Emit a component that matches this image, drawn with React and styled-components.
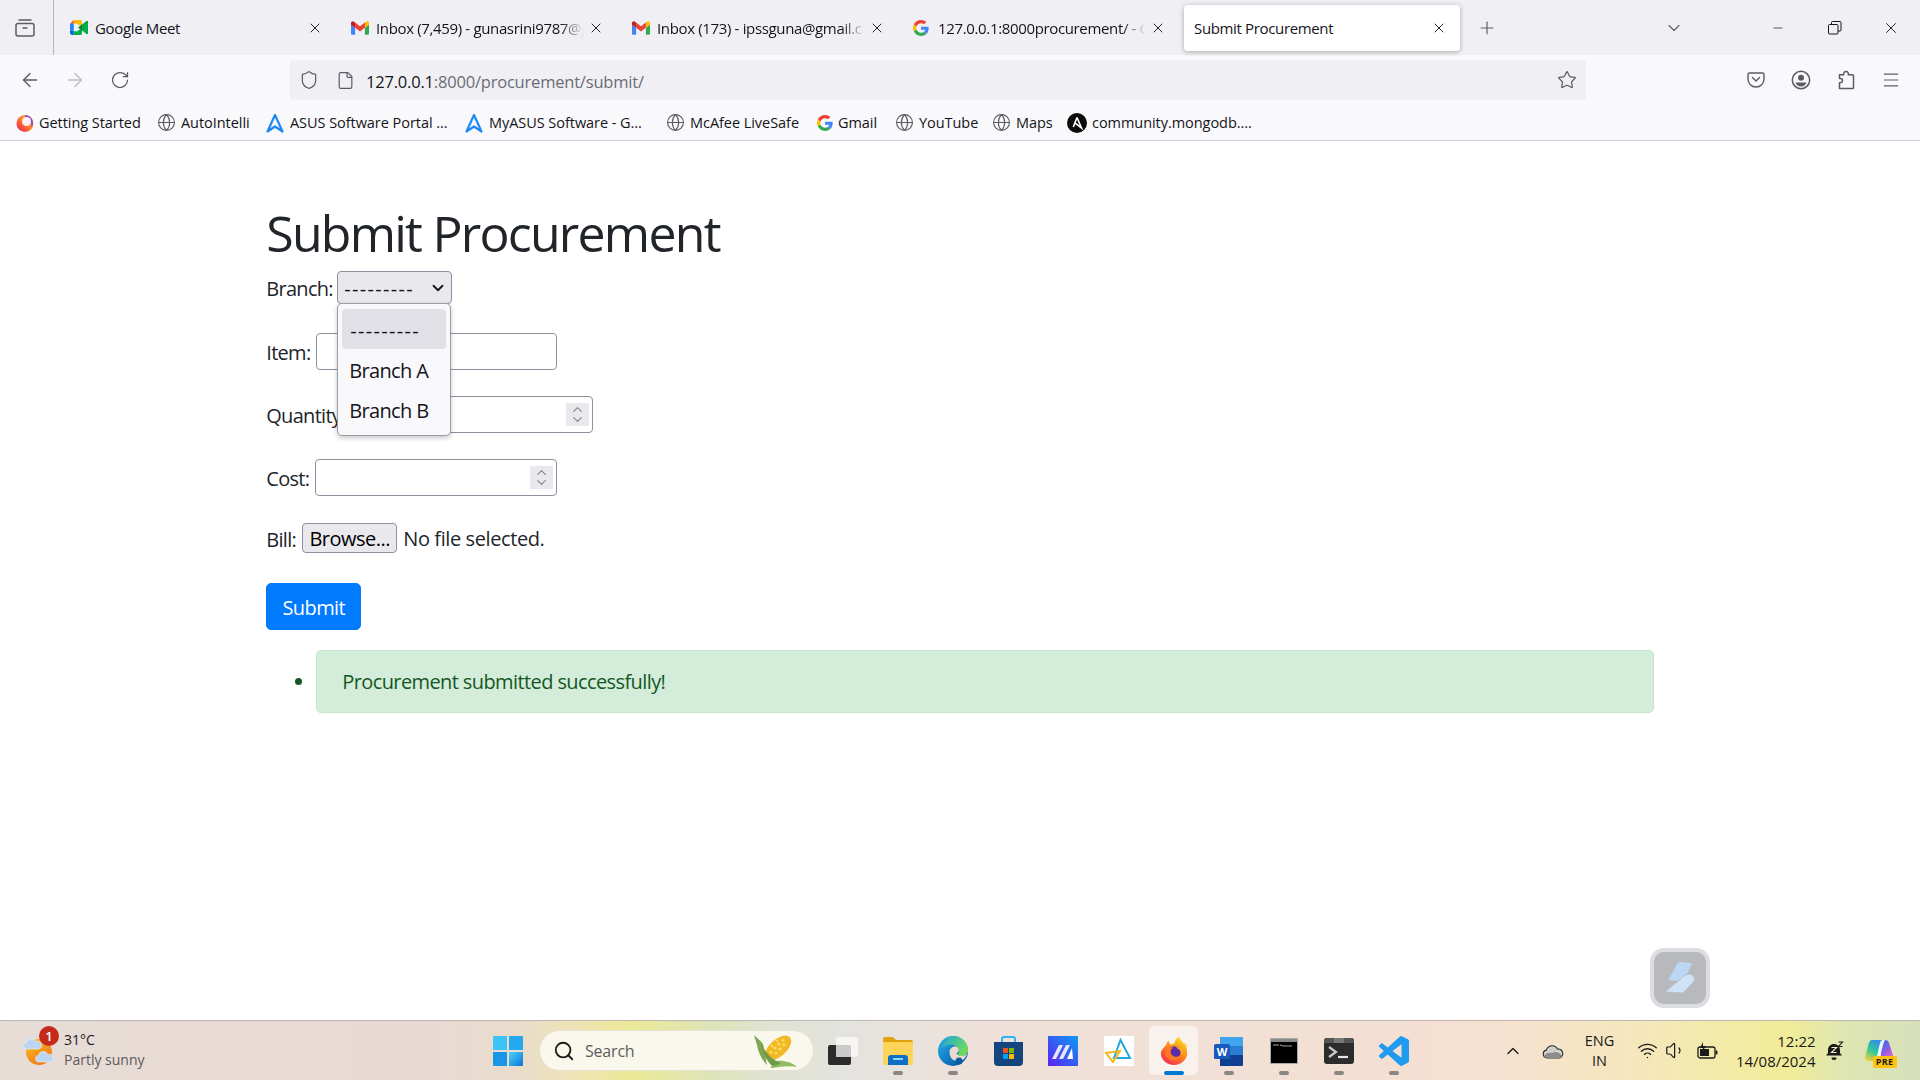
import React from "react";
import styled, { createGlobalStyle } from "styled-components";
import {
  X,
  Plus,
  ChevronDown,
  ChevronUp,
  ArrowLeft,
  ArrowRight,
  RotateCw,
  Shield,
  File,
  Star,
  Globe,
  Menu,
  Minus,
  Search,
  Wifi,
  Volume1,
} from "lucide-react";

const UI_FONT = `"Open Sans", "Noto Sans", "Liberation Sans", sans-serif`;

const GlobalStyle = createGlobalStyle`
  html, body { margin: 0; padding: 0; background: #fff; }
  * { box-sizing: border-box; }
  body { font-family: ${UI_FONT}; overflow: hidden; }
`;

function MeetIcon() {
  return (
    <svg width="18" height="15" viewBox="0 0 24 20">
      <path d="M5 0L0 5h5z" fill="#ea4335" />
      <path d="M0 5h5v9H0z" fill="#2684fc" />
      <path d="M0 14v3a3 3 0 003 3h2v-6z" fill="#0066da" />
      <path d="M5 0h9a2 2 0 012 2v5h-5V5H5z" fill="#ffba00" />
      <path d="M5 20h9a2 2 0 002-2v-5h-5v2H5z" fill="#00ac47" />
      <path d="M11 10l5-4.5v9z" fill="#00832d" />
      <path d="M16 6l6-4.6c.7-.5 2-.3 2 1v15.2c0 1.3-1.3 1.5-2 1L16 14z" fill="#00ac47" />
    </svg>
  );
}

function GmailIcon() {
  return (
    <svg width="18" height="14" viewBox="0 0 24 18">
      <path d="M0 3.5V16.4A1.6 1.6 0 001.6 18H5.5V8.6z" fill="#4285f4" />
      <path d="M24 3.5V16.4a1.6 1.6 0 01-1.6 1.6H18.5V8.6z" fill="#34a853" />
      <path d="M18.5 1.6V8.6L24 4.5V2.4c0-2-2.3-3.1-3.8-1.9z" fill="#fbbc04" />
      <path d="M5.5 8.6V1.6L12 6.5l6.5-4.9v7L12 13.5z" fill="#ea4335" />
      <path d="M0 2.4V4.5l5.5 4.1v-7L3.8.5C2.3-.7 0 .4 0 2.4z" fill="#c5221f" />
    </svg>
  );
}

function GoogleIcon({ size = 16 }) {
  return (
    <svg width={size} height={size} viewBox="0 0 48 48">
      <path fill="#EA4335" d="M24 9.5c3.54 0 6.71 1.22 9.21 3.6l6.85-6.85C35.9 2.38 30.47 0 24 0 14.62 0 6.51 5.38 2.56 13.22l7.98 6.19C12.43 13.72 17.74 9.5 24 9.5z" />
      <path fill="#4285F4" d="M46.98 24.55c0-1.57-.15-3.09-.38-4.55H24v9.02h12.94c-.58 2.96-2.26 5.48-4.78 7.18l7.73 6c4.51-4.18 7.09-10.36 7.09-17.65z" />
      <path fill="#FBBC05" d="M10.53 28.59c-.48-1.45-.76-2.99-.76-4.59s.27-3.14.76-4.59l-7.98-6.19C.92 16.46 0 20.12 0 24c0 3.88.92 7.54 2.56 10.78l7.97-6.19z" />
      <path fill="#34A853" d="M24 48c6.48 0 11.93-2.13 15.89-5.81l-7.73-6c-2.15 1.45-4.92 2.3-8.16 2.3-6.26 0-11.57-4.22-13.47-9.91l-7.98 6.19C6.51 42.62 14.62 48 24 48z" />
    </svg>
  );
}

function FirefoxIcon({ size = 18, id = "fx" }) {
  return (
    <svg width={size} height={size} viewBox="0 0 32 32">
      <defs>
        <linearGradient id={`${id}-a`} x1="0.8" y1="0" x2="0.2" y2="1">
          <stop offset="0" stopColor="#ffe226" />
          <stop offset="0.45" stopColor="#ff8a16" />
          <stop offset="1" stopColor="#f0285a" />
        </linearGradient>
      </defs>
      <path d="M30 11c-.6-1.6-2-3.4-3-4 .8 1.6 1.3 3.2 1.4 4.4-1.7-4.2-4.5-5.9-6.8-9.5-.1-.2-.3-.4-.4-.7-.1-.1-.1-.2-.2-.4-1 .6-4 3.1-4.6 7.2-1.7.1-3 .8-3.8 1.6-.6-.4-.5-.8-.5-.8C11.200 8 10.700 6.500 10.500 5 8.800 6 8 8 7.800 9.200 5.500 12 2 15 2 18.500 2 25.500 8.300 31 16 31s14-5.500 14-12.500c0-2.700-.3-5.200-1-7.500z" fill={`url(#${id}-a)`} />
      <circle cx="16.500" cy="17.500" r="6.500" fill="#5f2ca8" />
      <path d="M9 14c1.500-1.500 4-2 6-1.500-1.500 1-3 2-2.500 5 .4 3 3.500 5 7 4.500 2-.3 3.500-1.200 4.500-2.500-1 4-4.500 6.500-8.500 6.500-5 0-9-4-9-8.500 0-1.200.8-2.500 2.500-3.500z" fill="#ff7a1e" />
      <path d="M17 12c3.500-.5 7 1.500 8 5 .5 1.800.2 3-.3 4 .2-4-2.700-7.500-7.700-9z" fill="#ffb52b" />
    </svg>
  );
}

function BookmarkFirefoxIcon() {
  return (
    <svg width="18" height="18" viewBox="0 0 18 18">
      <defs>
        <linearGradient id="fx-bm" x1="0.9" y1="0.1" x2="0.1" y2="0.9">
          <stop offset="0" stopColor="#ffc23a" />
          <stop offset="0.5" stopColor="#ff7a2a" />
          <stop offset="1" stopColor="#f0285a" />
        </linearGradient>
      </defs>
      <circle cx="9" cy="9.500" r="8.500" fill="url(#fx-bm)" />
      <path d="M9 1a8 8 0 018 8c0 2-1 4-1.800 4.600.8-4-1-8.400-6.200-9.800z" fill="#8f4bd8" />
      <circle cx="10.500" cy="7.500" r="4.500" fill="#fdf3ee" />
    </svg>
  );
}

function AsusIcon() {
  return (
    <svg width="20" height="20" viewBox="0 0 20 20">
      <path d="M10 2L2.500 18.500 10 13.500l7.500 5z" fill="none" stroke="#1e88f5" strokeWidth="2.200" strokeLinejoin="round" />
    </svg>
  );
}

function AnsibleIcon() {
  return (
    <svg width="20" height="20" viewBox="0 0 20 20">
      <circle cx="10" cy="10" r="10" fill="#0b0b0b" />
      <path d="M10 4.500l4.500 10.500-7-5.400M10 4.500L6.300 14" fill="none" stroke="#fff" strokeWidth="1.600" />
    </svg>
  );
}

function TabsViewIcon() {
  return (
    <svg width="20" height="20" viewBox="0 0 20 20" fill="none" stroke="#5b5b66" strokeWidth="1.500">
      <rect x="1" y="5.500" width="18" height="12.500" rx="2" />
      <path d="M4 2h12" strokeLinecap="round" />
      <path d="M8 10h4" strokeLinecap="round" />
    </svg>
  );
}

function PocketIcon() {
  return (
    <svg width="18" height="16" viewBox="0 0 18 16" fill="none" stroke="#5b5b66" strokeWidth="1.400">
      <path d="M2.500 1h13A1.500 1.500 0 0117 2.500V7a8 8 0 01-16 0V2.500A1.500 1.500 0 012.500 1z" />
      <path d="M5.500 5.500L9 9l3.500-3.500" strokeLinecap="round" />
    </svg>
  );
}

function AccountIcon() {
  return (
    <svg width="20" height="20" viewBox="0 0 20 20">
      <circle cx="10" cy="10" r="8.700" fill="none" stroke="#5b5b66" strokeWidth="1.500" />
      <circle cx="10" cy="7.700" r="3" fill="#5b5b66" />
      <path d="M4.500 12.500h11c-.8 2.400-3 4-5.500 4s-4.700-1.600-5.500-4z" fill="#5b5b66" />
    </svg>
  );
}

function PuzzleIcon() {
  return (
    <svg width="18" height="20" viewBox="0 0 18 20" fill="none" stroke="#5b5b66" strokeWidth="1.500" strokeLinejoin="round">
      <path d="M9 1.500c-1.800 0-2.600 1.300-2.200 3.200H2.500v3.800c2.200-.4 3 .8 3 2s-.8 2.500-3 2.200v5.800h13.200c.5 0 .8-.3.800-.8V6c0-.8-.4-1.300-1.200-1.300h-4C11.600 2.800 10.800 1.500 9 1.500z" />
    </svg>
  );
}

function RestoreIcon() {
  return (
    <svg width="14" height="14" viewBox="0 0 14 14" fill="none" stroke="#15141a" strokeWidth="1">
      <rect x="0.500" y="3.500" width="9.500" height="9.500" rx="1" />
      <path d="M3.500 3.500V1.500a1 1 0 011-1h7.500a1 1 0 011 1v7.500a1 1 0 01-1 1H10" />
    </svg>
  );
}

function WeatherIcon() {
  return (
    <svg width="34" height="34" viewBox="0 0 34 34">
      <defs>
        <linearGradient id="sun" x1="0" y1="0" x2="0.6" y2="1">
          <stop offset="0" stopColor="#fbc02d" />
          <stop offset="1" stopColor="#ef7a12" />
        </linearGradient>
      </defs>
      <circle cx="16" cy="19" r="13" fill="url(#sun)" />
      <path d="M3 16a3.500 3.500 0 01.500-6.800 5 5 0 019.400-.6A3.700 3.700 0 0116 16z" fill="#bcd6f2" stroke="#eef5fc" strokeWidth="0.600" />
      <path d="M15 29a3.500 3.500 0 01.500-6.800 5 5 0 019.400-.6A3.700 3.700 0 0128 29z" fill="#bcd6f2" stroke="#eef5fc" strokeWidth="0.600" />
    </svg>
  );
}

function StartIcon() {
  return (
    <svg width="30" height="30" viewBox="0 0 30 30">
      <defs>
        <linearGradient id="win" x1="0" y1="0" x2="1" y2="1">
          <stop offset="0" stopColor="#4fd1fb" />
          <stop offset="1" stopColor="#0a74d6" />
        </linearGradient>
      </defs>
      <path d="M1 0h13v14H0V1a1 1 0 011-1z" fill="#3cc4f8" />
      <path d="M16 0h13a1 1 0 011 1v13H16z" fill="#24a8ee" />
      <path d="M0 16h14v14H1a1 1 0 01-1-1z" fill="#1996e6" />
      <path d="M16 16h14v13a1 1 0 01-1 1H16z" fill="url(#win)" />
    </svg>
  );
}

function CornIcon() {
  return (
    <svg width="47" height="36" viewBox="0 0 47 36">
      <path d="M2 2c3 3 6 5 9 9l4 21c-5-5-9-13-10-20z" fill="#7da552" />
      <path d="M18 35c7 0 17-3 27-1-5-5-14-7-21-6z" fill="#93bb66" />
      <ellipse cx="26" cy="15" rx="8.500" ry="16" transform="rotate(48 26 15)" fill="#f2b824" />
      <g fill="#fbdc62">
        <circle cx="19" cy="19" r="1.600" />
        <circle cx="23" cy="15" r="1.600" />
        <circle cx="27" cy="11" r="1.600" />
        <circle cx="31" cy="7" r="1.600" />
        <circle cx="24" cy="20" r="1.600" />
        <circle cx="28" cy="16" r="1.600" />
        <circle cx="32" cy="12" r="1.600" />
        <circle cx="20" cy="13" r="1.300" />
        <circle cx="25" cy="8" r="1.300" />
      </g>
      <path d="M9 11c2 9 5 16 11 22 3 0 6-1 9-3-9-3-15-10-20-19z" fill="#6f9a4a" />
    </svg>
  );
}

function TaskViewIcon() {
  return (
    <svg width="30" height="28" viewBox="0 0 30 28">
      <rect x="0" y="8" width="23" height="20" rx="2" fill="#2b2b2b" />
      <rect x="8" y="0" width="22" height="20" rx="2" fill="#fff" fillOpacity="0.65" />
      <rect x="8" y="8" width="15" height="12" fill="#cfcfcf" fillOpacity="0.8" />
    </svg>
  );
}

function ExplorerIcon() {
  return (
    <svg width="30" height="28" viewBox="0 0 30 28">
      <path d="M0 2a2 2 0 012-2h8l3 3h15a2 2 0 012 2v3H0z" fill="#e0a30e" />
      <path d="M0 5h30v21a2 2 0 01-2 2H2a2 2 0 01-2-2z" fill="#fdd35a" />
      <path d="M5 28V21a3 3 0 013-3h14a3 3 0 013 3v7z" fill="#0f6fc6" />
      <rect x="10" y="21" width="10" height="2" fill="#8fd0f7" />
    </svg>
  );
}

function EdgeIcon() {
  return (
    <svg width="30" height="30" viewBox="0 0 30 30">
      <defs>
        <linearGradient id="edgeA" x1="0" y1="0" x2="1" y2="1">
          <stop offset="0" stopColor="#33b5e8" />
          <stop offset="0.5" stopColor="#0f7fc8" />
          <stop offset="1" stopColor="#0c4f94" />
        </linearGradient>
        <linearGradient id="edgeB" x1="0" y1="0" x2="1" y2="0.6">
          <stop offset="0" stopColor="#1fa9d6" />
          <stop offset="1" stopColor="#6fdb5a" />
        </linearGradient>
      </defs>
      <circle cx="15" cy="15" r="15" fill="url(#edgeA)" />
      <path d="M15 0c9 0 15 6.500 15 14 0 4-3 6-6.500 6-2 0-3.500-.6-4-1.500 2-1.500 2-5-.5-7.500C15 7 8 8 4 12 6 5 10 0 15 0z" fill="url(#edgeB)" />
      <path d="M11.500 16c0-3 2.300-5.500 5.500-5.500 2.300 0 3.800 1.500 3.800 3.500 0 1.200-.8 2.500-2.300 3.500.8 1.500 2.600 2.500 5 2.500 2.300 0 4.300-1 5.500-2-.9 2.500-2.300 4.500-4 6-3 1-6 1-9 .2-2.800-.9-4.500-4.700-4.500-8.200z" fill="#ead9d0" />
      <circle cx="21" cy="25" r="3.500" fill="#0c5aa2" />
    </svg>
  );
}

function StoreIcon() {
  return (
    <svg width="29" height="30" viewBox="0 0 29 30">
      <path d="M8 7V3a2 2 0 012-2h9a2 2 0 012 2v4" fill="none" stroke="#29b6f0" strokeWidth="2" />
      <path d="M0 6h29v20a4 4 0 01-4 4H4a4 4 0 01-4-4z" fill="#14457e" />
      <rect x="9" y="12" width="5" height="5" fill="#f25022" />
      <rect x="15" y="12" width="5" height="5" fill="#7fba00" />
      <rect x="9" y="18" width="5" height="5" fill="#00a4ef" />
      <rect x="15" y="18" width="5" height="5" fill="#ffb900" />
    </svg>
  );
}

function MatrixIcon() {
  return (
    <svg width="30" height="30" viewBox="0 0 30 30">
      <defs>
        <linearGradient id="matrix" x1="0" y1="1" x2="1" y2="0">
          <stop offset="0" stopColor="#5a22f0" />
          <stop offset="1" stopColor="#0d9bf5" />
        </linearGradient>
      </defs>
      <rect width="30" height="30" fill="url(#matrix)" />
      <path d="M4 23l7-14h4l-7 14zM11 23l7-14h4l-7 14z" fill="#e8e4ff" />
      <path d="M19 23l5-11 1 11z" fill="#fff" />
    </svg>
  );
}

function ZohoIcon() {
  return (
    <svg width="30" height="30" viewBox="0 0 30 30">
      <rect width="30" height="30" fill="#fff" />
      <path d="M16.500 4L26 22H10z" fill="none" stroke="#22a7e0" strokeWidth="2" />
      <path d="M2 17l14-2-7 11z" fill="none" stroke="#f5b81c" strokeWidth="2" />
    </svg>
  );
}

function WordIcon() {
  return (
    <svg width="30" height="30" viewBox="0 0 30 30">
      <path d="M6 1h22a1 1 0 011 1v8H6z" fill="#41a5ee" />
      <path d="M6 10h23v9H6z" fill="#2b7cd3" />
      <path d="M6 19h23v10a1 1 0 01-1 1H6z" fill="#103f91" />
      <rect x="0" y="8" width="16" height="15" rx="1.500" fill="#185abd" />
      <text x="8" y="20" textAnchor="middle" fontSize="11" fontWeight="700" fill="#fff" fontFamily="Open Sans, sans-serif">W</text>
    </svg>
  );
}

function CmdIcon() {
  return (
    <svg width="28" height="26" viewBox="0 0 28 26">
      <rect width="28" height="26" fill="#a9a9a9" />
      <rect x="1" y="1" width="26" height="24" fill="#000" />
      <rect x="1" y="1" width="26" height="3" fill="#8a8a8a" />
      <path d="M3 7h6M10 7l3 1h9" stroke="#cfcfcf" strokeWidth="0.800" fill="none" />
    </svg>
  );
}

function TerminalIcon() {
  return (
    <svg width="30" height="26" viewBox="0 0 30 26">
      <rect width="30" height="26" rx="3" fill="#2c2c2c" />
      <path d="M3 0h24a3 3 0 013 3v2H0V3a3 3 0 013-3z" fill="#555" />
      <rect x="10" y="0" width="10" height="5" fill="#777" />
      <path d="M5 9l7 5-7 5" fill="none" stroke="#c8c8c8" strokeWidth="2.200" />
      <path d="M14 19h10" stroke="#e6e6e6" strokeWidth="2.200" />
    </svg>
  );
}

function VscodeIcon() {
  return (
    <svg width="30" height="30" viewBox="0 0 24 24">
      <path fill="#1f9cf0" d="M23.15 2.587L18.21.21a1.494 1.494 0 0 0-1.705.29l-9.46 8.63-4.12-3.128a.999.999 0 0 0-1.276.057L.327 7.261A1 1 0 0 0 .326 8.74L3.899 12 .326 15.26a1 1 0 0 0 .001 1.479L1.65 17.94a.999.999 0 0 0 1.276.057l4.12-3.128 9.46 8.63a1.492 1.492 0 0 0 1.704.29l4.942-2.377A1.5 1.5 0 0 0 24 20.06V3.939a1.5 1.5 0 0 0-.85-1.352zm-5.146 14.861L10.826 12l7.178-5.448v10.896z" />
    </svg>
  );
}

function CloudIcon() {
  return (
    <svg width="22" height="16" viewBox="0 0 22 16">
      <path d="M5 15a4 4 0 01-.6-7.900A6 6 0 0115.500 6 4.500 4.500 0 0117 15z" fill="#cfcfcc" stroke="#2a2a2a" strokeWidth="1.100" />
      <path d="M2 13c2-3 5-4 8-3 3-2 7-1.500 10 3l-2 2H4z" fill="#8c8c8a" />
    </svg>
  );
}

function BatteryIcon() {
  return (
    <svg width="21" height="18" viewBox="0 0 21 18">
      <rect x="1" y="5" width="17" height="11" rx="2" fill="none" stroke="#1a1a1a" strokeWidth="1.300" />
      <rect x="3" y="7" width="9" height="7" fill="#1a1a1a" />
      <rect x="18.500" y="8.500" width="2" height="4" rx="1" fill="#1a1a1a" />
      <path d="M6 0L3 6h3l-1 4 4-6H6z" fill="#1a1a1a" />
    </svg>
  );
}

function BellIcon() {
  return (
    <svg width="18" height="20" viewBox="0 0 18 20">
      <path d="M8 3c3.300 0 6 2.500 6 6v3l2 2.500H0L2 12V9c0-3.500 2.700-6 6-6z" fill="#1a1a1a" />
      <path d="M5.500 16.500h5a2.500 2.500 0 01-5 0z" fill="#1a1a1a" />
      <path d="M5.500 6.500h5l-5 5h5" fill="none" stroke="#f2ecc0" strokeWidth="1.100" />
      <path d="M12.500 1h4l-4 4.500h4" fill="none" stroke="#1a1a1a" strokeWidth="1.100" />
    </svg>
  );
}

function CopilotIcon() {
  return (
    <svg width="30" height="23" viewBox="0 0 30 23">
      <defs>
        <linearGradient id="copA" x1="0.7" y1="0" x2="0.2" y2="1">
          <stop offset="0" stopColor="#2f8fe8" />
          <stop offset="0.5" stopColor="#2fc89a" />
          <stop offset="1" stopColor="#f4d03a" />
        </linearGradient>
        <linearGradient id="copB" x1="0.2" y1="0" x2="0.8" y2="1">
          <stop offset="0" stopColor="#2f6fe8" />
          <stop offset="0.5" stopColor="#9a5ae0" />
          <stop offset="1" stopColor="#ee6fc0" />
        </linearGradient>
      </defs>
      <path d="M8 1h9l-5 21H5c-3 0-4.700-2-3.700-5l3-11C5 3 6 1 8 1z" fill="url(#copA)" />
      <path d="M17 1h4c2.500 0 3.500 1.500 4.200 3.500l4 12.500c1 3-.7 5-3 5H17z" fill="url(#copB)" />
      <path d="M15 22l3.500-14c.5-2 1-4 2.500-7h-3c-1.500 2-2.500 4-3 7L12 22z" fill="#e9f4f8" />
    </svg>
  );
}

const tabs = [
  { title: "Google Meet", icon: <MeetIcon /> },
  { title: "Inbox (7,459) - gunasrini9787@g", icon: <GmailIcon />, fade: true },
  { title: "Inbox (173) - ipssguna@gmail.c", icon: <GmailIcon />, fade: true },
  { title: "127.0.0.1:8000procurement/ - G", icon: <GoogleIcon />, fade: true },
  { title: "Submit Procurement", active: true },
];

const bookmarks = [
  { label: "Getting Started", width: 141, icon: <BookmarkFirefoxIcon /> },
  { label: "AutoIntelli", width: 108, icon: <Globe size={19} strokeWidth={1.4} color="#5b5b66" /> },
  { label: "ASUS Software Portal ...", width: 199, icon: <AsusIcon /> },
  { label: "MyASUS Software - G...", width: 202, icon: <AsusIcon /> },
  { label: "McAfee LiveSafe", width: 151, icon: <Globe size={19} strokeWidth={1.4} color="#5b5b66" /> },
  { label: "Gmail", width: 78, icon: <GoogleIcon /> },
  { label: "YouTube", width: 97, icon: <Globe size={19} strokeWidth={1.4} color="#5b5b66" /> },
  { label: "Maps", width: 75, icon: <Globe size={19} strokeWidth={1.4} color="#5b5b66" /> },
  { label: "community.mongodb....", width: 190, icon: <AnsibleIcon /> },
];

const apps = [
  { key: "task", icon: <TaskViewIcon /> },
  { key: "explorer", icon: <ExplorerIcon />, running: true },
  { key: "edge", icon: <EdgeIcon />, running: true },
  { key: "store", icon: <StoreIcon /> },
  { key: "matrix", icon: <MatrixIcon /> },
  { key: "zoho", icon: <ZohoIcon /> },
  { key: "firefox", icon: <FirefoxIcon id="fx-task" size={30} />, active: true },
  { key: "word", icon: <WordIcon />, running: true },
  { key: "cmd", icon: <CmdIcon />, running: true },
  { key: "terminal", icon: <TerminalIcon />, running: true },
  { key: "code", icon: <VscodeIcon />, running: true },
];

function NumberField({ width }) {
  return (
    <FieldWrap>
      <TextInput type="text" $width={width} />
      <Spinner>
        <ChevronUp size={15} strokeWidth={1.9} color="#85858f" />
        <ChevronDown size={15} strokeWidth={1.9} color="#85858f" />
      </Spinner>
    </FieldWrap>
  );
}

export default function App() {
  return (
    <Screen>
      <GlobalStyle />
      <BrowserChrome>
        <TabStrip>
          <TabListButton>
            <TabsViewIcon />
          </TabListButton>
          <TabRow>
            {tabs.map((tab) => (
              <Tab key={tab.title} $active={tab.active}>
                {tab.icon && <Favicon>{tab.icon}</Favicon>}
                <TabTitle $fade={tab.fade}>{tab.title}</TabTitle>
                <X size={16} strokeWidth={1.4} color="#15141a" />
              </Tab>
            ))}
          </TabRow>
          <NewTab>
            <Plus size={20} strokeWidth={1.4} color="#5b5b66" />
          </NewTab>
          <TabListChevron>
            <ChevronDown size={20} strokeWidth={1.3} color="#5b5b66" />
          </TabListChevron>
          <WindowButton>
            <Minus size={14} strokeWidth={1.2} color="#15141a" />
          </WindowButton>
          <WindowButton>
            <RestoreIcon />
          </WindowButton>
          <WindowButton>
            <X size={18} strokeWidth={1.2} color="#15141a" />
          </WindowButton>
        </TabStrip>
        <Toolbar>
          <NavButton>
            <ArrowLeft size={22} strokeWidth={1.5} color="#5b5b66" />
          </NavButton>
          <NavButton>
            <ArrowRight size={22} strokeWidth={1.5} color="#bdbdc2" />
          </NavButton>
          <NavButton>
            <RotateCw size={20} strokeWidth={1.5} color="#5b5b66" />
          </NavButton>
          <UrlBar>
            <Shield size={20} strokeWidth={1.5} color="#5b5b66" />
            <File size={19} strokeWidth={1.5} color="#5b5b66" />
            <UrlText>
              127.0.0.1<UrlRest>:8000/procurement/submit/</UrlRest>
            </UrlText>
            <Star size={20} strokeWidth={1.5} color="#5b5b66" />
          </UrlBar>
          <ToolbarIcons>
            <NavButton>
              <PocketIcon />
            </NavButton>
            <NavButton>
              <AccountIcon />
            </NavButton>
            <NavButton>
              <PuzzleIcon />
            </NavButton>
            <NavButton>
              <Menu size={20} strokeWidth={1.4} color="#5b5b66" />
            </NavButton>
          </ToolbarIcons>
        </Toolbar>
        <BookmarkBar>
          {bookmarks.map((b) => (
            <Bookmark key={b.label} $width={b.width}>
              {b.icon}
              <span>{b.label}</span>
            </Bookmark>
          ))}
        </BookmarkBar>
      </BrowserChrome>

      <Page>
        <Container>
          <Heading>Submit Procurement</Heading>
          <Form>
            <Row $height={36}>
              <Label $width={71} $raised>Branch:</Label>
              <Select>
                <SelectValue>---------</SelectValue>
                <ChevronDown size={18} strokeWidth={2.4} color="#15141a" />
                <Dropdown>
                  <Option $active>
                    <DashText>---------</DashText>
                  </Option>
                  <Option>Branch A</Option>
                  <Option>Branch B</Option>
                </Dropdown>
              </Select>
            </Row>
            <Row $height={37}>
              <Label $width={50}>Item:</Label>
              <TextInput type="text" $width={241} />
            </Row>
            <Row $height={37}>
              <Label $width={86}>Quantity:</Label>
              <NumberField width={241} />
            </Row>
            <Row $height={37}>
              <Label $width={49}>Cost:</Label>
              <NumberField width={242} />
            </Row>
            <Row $height={32}>
              <Label $width={36}>Bill:</Label>
              <BrowseButton type="button">Browse...</BrowseButton>
              <FileName>No file selected.</FileName>
            </Row>
            <SubmitButton type="button">Submit</SubmitButton>
          </Form>
          <Messages>
            <Message>Procurement submitted successfully!</Message>
          </Messages>
        </Container>
        <FloatingWidget>
          <svg width="34" height="34" viewBox="0 0 34 34">
            <path d="M15.300.7l14 1.600-9 18.400-15-1.700z" fill="#bcd7f3" />
            <path d="M21 15c2-2 6-2.500 9-.5 2 2 2 5 0 7L20 32 2 31z" fill="#cfe2f6" stroke="#b8b9bd" strokeWidth="0.800" />
          </svg>
        </FloatingWidget>
      </Page>

      <Taskbar>
        <Weather>
          <WeatherGraphic>
            <WeatherIcon />
            <WeatherBadge>1</WeatherBadge>
          </WeatherGraphic>
          <WeatherText>
            <span>31°C</span>
            <WeatherNote>Partly sunny</WeatherNote>
          </WeatherText>
        </Weather>
        <StartButton>
          <StartIcon />
        </StartButton>
        <SearchBox>
          <Search size={22} strokeWidth={2} color="#1c1c1c" />
          <SearchText>Search</SearchText>
          <CornIcon />
        </SearchBox>
        <AppRow>
          {apps.map((app) => (
            <AppButton key={app.key} $active={app.active}>
              {app.icon}
              {(app.running || app.active) && <AppDot $active={app.active} />}
            </AppButton>
          ))}
        </AppRow>
        <Tray>
          <TrayItem $width={40}>
            <ChevronUp size={20} strokeWidth={1.6} color="#1a1a1a" />
          </TrayItem>
          <TrayItem $width={40}>
            <CloudIcon />
          </TrayItem>
          <TrayLang>
            <span>ENG</span>
            <span>IN</span>
          </TrayLang>
          <TrayItem $width={28}>
            <Wifi size={21} strokeWidth={1.6} color="#1a1a1a" />
          </TrayItem>
          <TrayItem $width={28}>
            <Volume1 size={21} strokeWidth={1.4} color="#1a1a1a" />
          </TrayItem>
          <TrayItem $width={36}>
            <BatteryIcon />
          </TrayItem>
          <Clock>
            <span>12:22</span>
            <span>14/08/2024</span>
          </Clock>
          <TrayItem $width={38}>
            <BellIcon />
          </TrayItem>
          <Copilot>
            <CopilotIcon />
            <PreTag>PRE</PreTag>
          </Copilot>
        </Tray>
      </Taskbar>
    </Screen>
  );
}

const Screen = styled.div`
  width: 1920px;
  height: 1080px;
  display: flex;
  flex-direction: column;
  overflow: hidden;
  background: #fff;
`;

const BrowserChrome = styled.div`
  flex: 0 0 141px;
  display: flex;
  flex-direction: column;
  background: #f9f9fb;
  border-bottom: 1px solid #cfcfd8;
  color: #15141a;
`;

const TabStrip = styled.div`
  flex: 0 0 55px;
  display: flex;
  align-items: center;
  background: #f0f0f4;
  > * { flex-shrink: 0; }
`;

const TabListButton = styled.div`
  width: 54px;
  height: 55px;
  display: flex;
  align-items: center;
  justify-content: center;
  padding-right: 4px;
  border-right: 1px solid #b6b6bb;
`;

const TabRow = styled.div`
  display: flex;
  gap: 5px;
  height: 46px;
  margin-left: 6px;
`;

const Tab = styled.div`
  width: 276px;
  height: 46px;
  display: flex;
  align-items: center;
  padding: 0 13px 0 10px;
  border-radius: 4px;
  font-size: 15px;
  letter-spacing: -0.35px;
  background: ${(p) => (p.$active ? "#fff" : "transparent")};
  box-shadow: ${(p) => (p.$active ? "0 1px 5px rgba(0,0,0,.3)" : "none")};
`;

const Favicon = styled.span`
  flex: 0 0 25px;
  display: flex;
  align-items: center;
`;

const TabTitle = styled.span`
  flex: 1;
  min-width: 0;
  margin-right: 2px;
  white-space: nowrap;
  mask-image: ${(p) =>
    p.$fade ? "linear-gradient(to right, #000 88%, transparent 99%)" : "none"};
`;

const NewTab = styled.div`
  width: 32px;
  display: flex;
  justify-content: center;
  margin-left: 11px;
`;

const TabListChevron = styled.div`
  margin: 0 56px 0 151px;
  width: 40px;
  display: flex;
  justify-content: center;
`;

const WindowButton = styled.div`
  width: 56.5px;
  display: flex;
  justify-content: center;
`;

const Toolbar = styled.div`
  flex: 0 0 45px;
  display: flex;
  align-items: center;
  padding: 5px 0 0 7px;
`;

const NavButton = styled.div`
  width: 45px;
  display: flex;
  justify-content: center;
  align-items: center;
`;

const UrlBar = styled.div`
  width: 1296px;
  height: 40px;
  margin-left: 148px;
  display: flex;
  align-items: center;
  gap: 17px;
  padding: 0 9px;
  background: #f0f0f4;
  border-radius: 4px;
  svg:last-child { margin-left: auto; }
`;

const UrlText = styled.span`
  font-size: 16.5px;
  letter-spacing: -0.2px;
  margin-left: -6px;
  padding-top: 2px;
`;

const UrlRest = styled.span`
  color: #6b6b74;
`;

const ToolbarIcons = styled.div`
  display: flex;
  margin-left: 147px;
`;

const BookmarkBar = styled.div`
  flex: 1;
  display: flex;
  align-items: center;
  padding: 5px 0 0 16px;
`;

const Bookmark = styled.div`
  flex: 0 0 ${(p) => p.$width}px;
  display: flex;
  align-items: center;
  gap: 5px;
  font-size: 14.5px;
  letter-spacing: -0.05px;
  white-space: nowrap;
`;

const Page = styled.main`
  flex: 1;
  position: relative;
  padding-top: 62px;
  color: #212529;
  font-size: 20px;
`;

const Container = styled.div`
  width: 1425px;
  margin: 0 auto;
  padding: 0 18.75px;
`;

const Heading = styled.h1`
  margin: 0 0 7px;
  height: 60px;
  font-size: 50px;
  line-height: 60px;
  font-weight: 400;
  letter-spacing: -1.75px;
`;

const Form = styled.form`
  display: flex;
  flex-direction: column;
  gap: 26px;
  align-items: flex-start;
  margin: 0;
  padding-top: 1px;
`;

const Row = styled.div`
  display: flex;
  align-items: center;
  height: ${(p) => p.$height}px;
`;

const Label = styled.label`
  flex: 0 0 ${(p) => p.$width}px;
  font-size: 20px;
  white-space: nowrap;
  letter-spacing: -0.7px;
  padding: ${(p) => (p.$raised ? "0 0 2px" : "2px 0 0")};
`;

const Select = styled.div`
  position: relative;
  align-self: flex-start;
  width: 115px;
  height: 33px;
  display: flex;
  align-items: center;
  justify-content: space-between;
  padding: 0 4px 0 6px;
  background: #e9e9ed;
  border: 1px solid #8f8f9d;
  border-radius: 4px;
  color: #15141a;
`;

const SelectValue = styled.span`
  font-size: 20px;
  letter-spacing: 1.3px;
  padding-top: 2px;
`;

const Dropdown = styled.div`
  position: absolute;
  z-index: 5;
  left: -1px;
  top: 31px;
  width: 114px;
  height: 133px;
  padding: 5px 4px;
  background: #f9f9fb;
  border: 1px solid #9b9ba6;
  border-radius: 5px;
  box-shadow: 0 2px 5px rgba(0, 0, 0, 0.22);
`;

const Option = styled.div`
  height: 40px;
  display: flex;
  align-items: center;
  padding: 2px 0 0 7px;
  font-size: 20px;
  letter-spacing: -0.65px;
  border-radius: 4px;
  background: ${(p) => (p.$active ? "#e0e0e6" : "transparent")};
`;

const DashText = styled.span`
  letter-spacing: 1.3px;
  padding-left: 1px;
`;

const FieldWrap = styled.div`
  position: relative;
  display: flex;
`;

const TextInput = styled.input`
  width: ${(p) => p.$width}px;
  height: 37px;
  padding: 0 8px;
  background: #fff;
  border: 1px solid #8f8f9d;
  border-radius: 4px;
  outline: none;
`;

const Spinner = styled.div`
  position: absolute;
  right: 4px;
  top: 7px;
  width: 23px;
  height: 23px;
  display: flex;
  flex-direction: column;
  align-items: center;
  justify-content: center;
  background: #e9e9ed;
  svg { margin: -2.5px 0; }
`;

const BrowseButton = styled.button`
  width: 95px;
  height: 30px;
  padding: 0;
  margin-right: 6px;
  font-family: ${UI_FONT};
  font-size: 20px;
  letter-spacing: -0.5px;
  color: #000;
  background: #e9e9ed;
  border: 1px solid #8f8f9d;
  border-radius: 4px;
`;

const FileName = styled.span`
  font-size: 20px;
  letter-spacing: -0.4px;
`;

const SubmitButton = styled.button`
  width: 95px;
  height: 47px;
  margin-top: 3px;
  padding: 2px 0 0;
  font-family: ${UI_FONT};
  font-size: 20px;
  letter-spacing: -0.6px;
  color: #fff;
  background: #007bff;
  border: 1px solid #007bff;
  border-radius: 5px;
`;

const Messages = styled.ul`
  margin: 20px 0 0;
  padding: 0 0 0 50px;
`;

const Message = styled.li`
  height: 63px;
  display: list-item;
  padding: 0 25px;
  line-height: 61px;
  font-size: 20px;
  letter-spacing: -0.6px;
  color: #155724;
  background: #d4edda;
  border: 1px solid #c3e6cb;
  border-radius: 5px;
`;

const FloatingWidget = styled.div`
  position: absolute;
  left: 1650px;
  top: 807px;
  width: 60px;
  height: 60px;
  display: flex;
  align-items: center;
  justify-content: center;
  background: #b8b9bd;
  border: 4px solid #dcdde1;
  border-radius: 14px;
`;

const Taskbar = styled.footer`
  flex: 0 0 60px;
  display: flex;
  align-items: center;
  border-top: 1px solid #bdb6b0;
  background: linear-gradient(
    to right,
    #e7dcd6 0%,
    #e9d9d5 22%,
    #e9dccb 27%,
    #efe4b6 30%,
    #ebe996 33%,
    #dde4b8 37%,
    #e0e2d2 40%,
    #e4e3df 44%,
    #efe1d9 52%,
    #f4dfd3 73%,
    #f6e2cf 79%,
    #f5e8b6 87%,
    #f1ec98 93%,
    #dfe6b0 96%,
    #d6e0bc 100%
  );
`;

const Weather = styled.div`
  flex: 0 0 493px;
  display: flex;
  align-items: center;
  gap: 7px;
  padding: 0 0 2px 23px;
`;

const WeatherGraphic = styled.div`
  position: relative;
  width: 34px;
  height: 34px;
`;

const WeatherBadge = styled.span`
  position: absolute;
  left: 16px;
  top: -7px;
  width: 20px;
  height: 20px;
  border-radius: 50%;
  display: flex;
  align-items: center;
  justify-content: center;
  font-size: 13px;
  font-weight: 600;
  color: #fff;
  background: #c42b1c;
`;

const WeatherText = styled.div`
  display: flex;
  flex-direction: column;
  font-size: 14px;
  line-height: 20px;
  color: #1a1a1a;
`;

const WeatherNote = styled.span`
  color: #5d5a58;
`;

const StartButton = styled.div`
  flex: 0 0 46px;
  display: flex;
`;

const SearchBox = styled.div`
  flex: 0 0 275px;
  height: 41px;
  display: flex;
  align-items: center;
  padding: 0 14px 0 13px;
  background: #faf8ec;
  border: 1px solid #e4e2d2;
  border-radius: 21px;
`;

const SearchText = styled.span`
  flex: 1;
  margin-left: 10px;
  font-size: 16px;
  letter-spacing: -0.2px;
  color: #5d5d5d;
`;

const AppRow = styled.div`
  display: flex;
  height: 100%;
  margin-left: 1.5px;
`;

const AppButton = styled.div`
  position: relative;
  width: 55.1px;
  display: flex;
  align-items: center;
  justify-content: center;
  &::before {
    content: "";
    position: absolute;
    display: ${(p) => (p.$active ? "block" : "none")};
    inset: 5px 3px 5px 3px;
    background: rgba(255, 255, 255, 0.55);
    border-radius: 5px;
  }
  svg { position: relative; }
`;

const AppDot = styled.span`
  position: absolute;
  bottom: 5px;
  left: 50%;
  transform: translateX(-50%);
  width: ${(p) => (p.$active ? 20 : 10)}px;
  height: 4px;
  border-radius: 2px;
  background: ${(p) => (p.$active ? "#0078d4" : "#8b8682")};
`;

const Tray = styled.div`
  display: flex;
  align-items: center;
  margin-left: 71px;
  height: 100%;
`;

const TrayItem = styled.div`
  flex: 0 0 ${(p) => p.$width}px;
  display: flex;
  align-items: center;
  justify-content: center;
`;

const TrayLang = styled.div`
  flex: 0 0 54px;
  margin-right: 7px;
  display: flex;
  flex-direction: column;
  align-items: center;
  font-size: 14.5px;
  line-height: 20px;
  color: #1a1a1a;
`;

const Clock = styled.div`
  flex: 0 0 90px;
  display: flex;
  flex-direction: column;
  align-items: flex-end;
  font-size: 15px;
  line-height: 20px;
  color: #1a1a1a;
`;

const Copilot = styled.div`
  position: relative;
  margin-left: 10px;
  display: flex;
`;

const PreTag = styled.span`
  position: absolute;
  right: -3px;
  bottom: -6px;
  padding: 0 3px;
  font-size: 9px;
  line-height: 12px;
  font-weight: 700;
  letter-spacing: 0.4px;
  color: #1a1a1a;
  background: #ffc20e;
  border-radius: 2px;
`;
